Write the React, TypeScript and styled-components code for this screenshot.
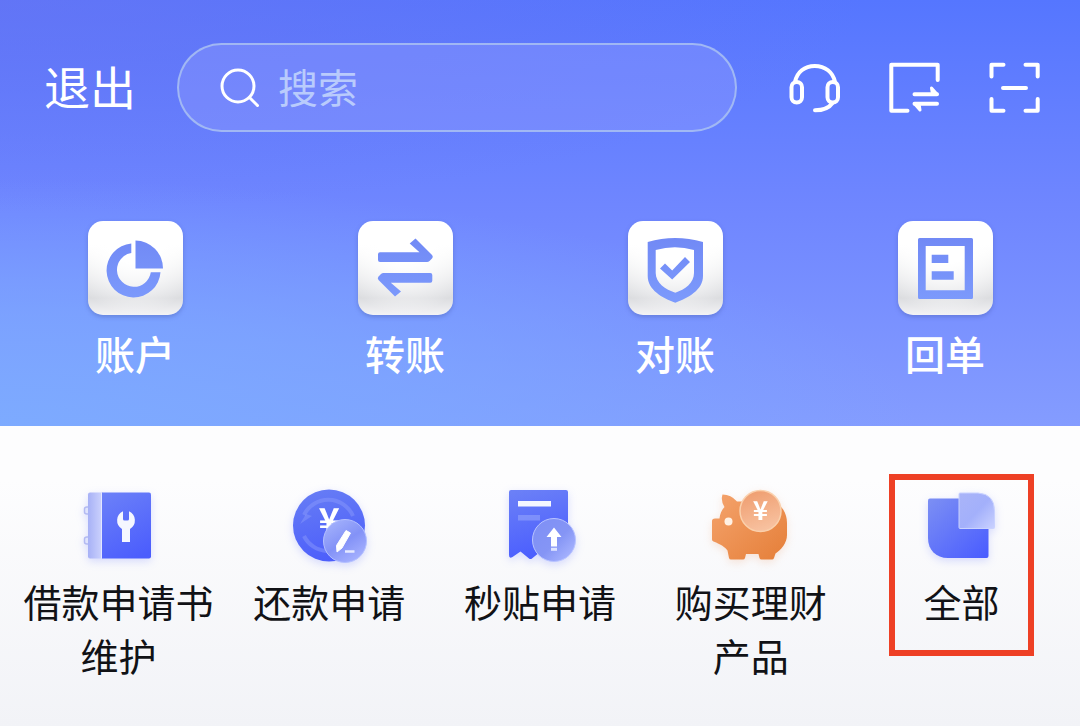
import React from "react";
import styled, { createGlobalStyle } from "styled-components";

const fontStack = '"Noto Sans CJK SC", "Noto Sans", sans-serif';

const GlobalStyle = createGlobalStyle`
  *, *::before, *::after { box-sizing: border-box; }
  body {
    margin: 0;
    min-height: 100vh;
    background: linear-gradient(180deg, #fdfdfd 0, #fdfdfe 480px, #f2f3f7 726px);
    font-family: ${fontStack};
  }
  button, input { font: inherit; }
`;

const Header = styled.header`
  padding-bottom: 44px;
  background:
    radial-gradient(ellipse 85% 58% at 0% 100%, rgba(124, 172, 255, 0.9) 0%, rgba(124, 170, 255, 0.65) 45%, rgba(124, 168, 255, 0) 100%),
    radial-gradient(ellipse 80% 50% at 0% 0%, rgba(106, 116, 240, 0.6) 0%, rgba(106, 116, 240, 0) 100%),
    linear-gradient(180deg, #5576ff 0%, #6f86ff 48%, #849cff 100%);
`;

const TopBar = styled.div`
  display: flex;
  align-items: center;
  padding: 43px 39px 0 44px;
`;

const PlainButton = styled.button`
  display: flex;
  padding: 0;
  border: 0;
  background: none;
  color: inherit;
  cursor: pointer;
`;

const ExitButton = styled(PlainButton)`
  flex: none;
  padding-bottom: 6px;
  color: #fff;
  font-size: 46px;
  line-height: 60px;
`;

const SearchBox = styled.label`
  display: flex;
  flex: 1;
  align-items: center;
  gap: 16px;
  min-width: 0;
  height: 89px;
  margin: 0 52px 0 41px;
  padding: 0 40px;
  border: 2px solid rgba(176, 200, 240, 0.75);
  border-radius: 45px;
  background: rgba(142, 156, 255, 0.4);
`;

const SearchInput = styled.input`
  flex: 1;
  min-width: 0;
  height: 60px;
  padding: 0 0 4px;
  border: 0;
  outline: 0;
  background: transparent;
  color: #fff;
  font-size: 40px;
  &::placeholder { color: #b9cbfc; opacity: 1; }
`;

const Actions = styled.div`
  display: flex;
  gap: 48px;
`;

const QuickGrid = styled.nav`
  display: grid;
  grid-template-columns: repeat(4, 1fr);
  margin-top: 89px;
`;

const QuickItem = styled(PlainButton)`
  flex-direction: column;
  align-items: center;
  gap: 9px;
  color: #fff;
  font-size: 40px;
  font-weight: 500;
  line-height: 58px;
`;

const Tile = styled.span`
  display: block;
  width: 95px;
  height: 94px;
  border-radius: 15px;
  background:
    radial-gradient(ellipse 80% 100% at 50% 0%, #fff 0%, #fff 45%, rgba(255, 255, 255, 0) 100%),
    linear-gradient(180deg, #fff 25%, #dcdde0 82%, #f3f3f5 100%);
  box-shadow: 0 2px 4px rgba(70, 90, 170, 0.4);
`;

const ServiceGrid = styled.nav`
  display: grid;
  grid-template-columns: repeat(5, 1fr);
  align-items: start;
  padding: 60px 13px 40px;
`;

const ServiceItem = styled(PlainButton)<{ $marked?: boolean }>`
  position: relative;
  flex-direction: column;
  align-items: center;
  gap: 8px;
  color: #111216;
  font-size: 38px;
  line-height: 54px;
  white-space: pre-line;

  &::after {
    content: "";
    display: ${(p) => (p.$marked ? "block" : "none")};
    position: absolute;
    top: -12px;
    left: calc(50% - 73px);
    width: 145px;
    height: 182px;
    border: 6px solid #ee4025;
  }
`;

const SearchIcon = () => (
  <svg width="43" height="44" viewBox="0 0 43 44" fill="none" stroke="#fff" strokeWidth="3" strokeLinecap="round" aria-hidden="true">
    <circle cx="19" cy="20" r="16" />
    <path d="M30.500 31.500 38.500 39.500" />
  </svg>
);

const LineIcon = ({ children }: { children: React.ReactNode }) => (
  <svg width="52" height="52" viewBox="0 0 52 52" fill="none" stroke="#fff" strokeWidth="4" strokeLinecap="round" strokeLinejoin="round" aria-hidden="true">
    {children}
  </svg>
);

const HeadsetIcon = () => (
  <LineIcon>
    <path d="M6 20C8 10 15.500 4 25.800 4S44 10 46 20" />
    <rect x="2.500" y="20" width="10.500" height="20.500" rx="5.200" />
    <rect x="38.500" y="20" width="10.500" height="20.500" rx="5.200" />
    <path d="M43.500 41C40 46 34 48.300 26 48.300" />
  </LineIcon>
);

const SwitchIcon = () => (
  <LineIcon>
    <path d="M48.700 18V2.700H2.300V48.700H18.500" />
    <path d="M25.500 32.300H48M25.500 41.700H48" />
    <path d="M42.500 26 48 32.300H43.500ZM25.500 41.700H30L31 48Z" fill="#fff" strokeWidth="3" />
  </LineIcon>
);

const ScanIcon = () => (
  <LineIcon>
    <path d="M2.500 14.500V2.700H14.500M36.500 2.700H48.700V14.500M48.700 37V48.700H36.500M14.500 48.700H2.500V37M14 26H37" />
  </LineIcon>
);

const TileIcon = ({ id, children }: { id: string; children: React.ReactNode }) => (
  <Tile>
    <svg width="95" height="94" viewBox="0 0 95 94" aria-hidden="true">
      <defs>
        <linearGradient id={id} x1="0" y1="16" x2="0" y2="80" gradientUnits="userSpaceOnUse">
          <stop offset="0" stopColor="#7189f5" />
          <stop offset="1" stopColor="#7c9afc" />
        </linearGradient>
      </defs>
      <g fill={`url(#${id})`}>{children}</g>
    </svg>
  </Tile>
);

const AccountIcon = () => (
  <TileIcon id="tile-account">
    <path d="M43.300 22.500A27 27 0 1 0 72.500 51.300H62.800A17 17 0 1 1 43.300 32Z" />
    <path d="M47.500 19.500A27.700 28 0 0 1 75 47.500H47.500Z" />
  </TileIcon>
);

const TransferIcon = () => (
  <TileIcon id="tile-transfer">
    <path d="M22 31.300H61.500L51.700 22.500 57.500 17.600 74 34Q75.500 35.800 74 37.500L71.500 40Q70.500 41 69 41H22Q20 41 20 39V33.300Q20 31.300 22 31.300Z" />
    <path d="M72.300 61.700H32.800L43 70.500 37 75.400 20.500 59Q19 57.200 20.500 55.500L23 53Q24 52 25.500 52H72.300Q74.300 52 74.300 54V59.700Q74.300 61.700 72.300 61.700Z" />
  </TileIcon>
);

const ReconcileIcon = () => (
  <TileIcon id="tile-reconcile">
    <path fillRule="evenodd" d="M19.700 21Q47 13 75 21V55C75 69 60 77 47.300 81.700C34.500 77 19.700 69 19.700 55ZM27.700 29Q47 23.500 66 29V52C66 62 57 68.500 47.300 71.700C37.500 68.500 27.700 62 27.700 52Z" />
    <path d="M32 47.500 37 42.500 44.200 49.500 57 36 62 41 44.200 58.500Z" />
  </TileIcon>
);

const ReceiptTileIcon = () => (
  <TileIcon id="tile-receipt">
    <path fillRule="evenodd" d="M21.500 17H73.500Q75 17 75 18.500V76.500Q75 78 73.500 78H21.500Q20 78 20 76.500V18.500Q20 17 21.500 17ZM27.700 25V69.300H66.700V25Z" />
    <path d="M33.700 33.700H50.300V42H33.700ZM33.700 50.300H55.700V58.700H33.700Z" />
  </TileIcon>
);

const ServiceSvg = styled.svg<{ $warm?: boolean }>`
  display: block;
  overflow: visible;
  filter: drop-shadow(0 3px 4px ${(p) => (p.$warm ? "rgba(235, 140, 80, 0.2)" : "rgba(90, 110, 255, 0.22)")});
`;

const YenMark = ({ x, y, size }: { x: number; y: number; size: number }) => (
  <text x={x} y={y} fontSize={size} fontWeight="700" fontFamily='"Noto Sans CJK SC", sans-serif' fill="#fff" textAnchor="middle">¥</text>
);

const BookIcon = () => (
  <ServiceSvg width="80" height="80" viewBox="0 0 80 80" aria-hidden="true">
    <defs>
      <linearGradient id="book-cover" x1="24" y1="7" x2="60" y2="73" gradientUnits="userSpaceOnUse">
        <stop offset="0" stopColor="#6c81f8" />
        <stop offset="1" stopColor="#4b5dfd" />
      </linearGradient>
      <linearGradient id="book-spine" x1="10" y1="0" x2="24" y2="0" gradientUnits="userSpaceOnUse">
        <stop offset="0" stopColor="#a7b1f6" />
        <stop offset="1" stopColor="#ccd2fd" />
      </linearGradient>
    </defs>
    <path d="M11 21H9Q6.500 21 6.500 23V26Q6.500 28 9 28H11M11 51H9Q6.500 51 6.500 53V56Q6.500 58 9 58H11" fill="#dfe3fd" stroke="#b3baf2" strokeWidth="1.500" />
    <path d="M12 6.500H25V72.500H12Q10 72.500 10 70.500V8.500Q10 6.500 12 6.500Z" fill="url(#book-spine)" />
    <path d="M24 6.500H71Q73 6.500 73 8.500V70.500Q73 72.500 71 72.500H24Z" fill="url(#book-cover)" />
    <path d="M23.500 6.500V72.500" stroke="#e3e7ff" strokeWidth="1" />
    <path d="M45 25.300V33Q45 34.500 46.500 34.500H49.500Q51 34.500 51 33V25.300A10 10 0 0 1 52 43V56H44V43A10 10 0 0 1 45 25.300Z" fill="#f5f7ff" />
  </ServiceSvg>
);

const RepayIcon = () => (
  <ServiceSvg width="80" height="80" viewBox="0 0 80 80" aria-hidden="true">
    <defs>
      <linearGradient id="repay-coin" x1="24" y1="4" x2="40" y2="76" gradientUnits="userSpaceOnUse">
        <stop offset="0" stopColor="#667cf5" />
        <stop offset="1" stopColor="#4c5efb" />
      </linearGradient>
      <linearGradient id="repay-badge" x1="42" y1="36" x2="68" y2="76" gradientUnits="userSpaceOnUse">
        <stop offset="0" stopColor="#a2b0fb" />
        <stop offset="0.500" stopColor="#8392f7" />
        <stop offset="1" stopColor="#a8b3ff" />
      </linearGradient>
    </defs>
    <circle cx="40" cy="39.500" r="36" fill="url(#repay-coin)" />
    <path d="M15 29A27 27 0 0 1 64 30M15 50A27 27 0 0 0 38 65" fill="none" stroke="#8797fb" strokeWidth="4" opacity="0.500" />
    <path d="M11 38 23 30 17 28Z" fill="#8797fb" opacity="0.500" />
    <YenMark x={40} y={48} size={36} />
    <circle cx="56" cy="55" r="21.500" fill="url(#repay-badge)" stroke="#b4c0ff" strokeWidth="1" />
    <path d="M57 44.500 61.500 47 53 62 48 66 47.500 59.500Z" fill="#fff" stroke="#fff" strokeWidth="1" strokeLinejoin="round" />
    <path d="M56 65.500H65.500" stroke="#e6eaff" strokeWidth="2.500" />
  </ServiceSvg>
);

const DiscountIcon = () => (
  <ServiceSvg width="80" height="80" viewBox="0 0 80 80" aria-hidden="true">
    <defs>
      <linearGradient id="discount-sheet" x1="20" y1="4" x2="40" y2="76" gradientUnits="userSpaceOnUse">
        <stop offset="0" stopColor="#6b80f7" />
        <stop offset="1" stopColor="#485bff" />
      </linearGradient>
      <linearGradient id="discount-badge" x1="36" y1="36" x2="72" y2="72" gradientUnits="userSpaceOnUse">
        <stop offset="0" stopColor="#7f90f5" />
        <stop offset="0.550" stopColor="#8595f5" />
        <stop offset="1" stopColor="#aab6ff" />
      </linearGradient>
    </defs>
    <path d="M11 4H66Q68 4 68 6V60L40.500 65.500 32 72.500Q30.500 73.500 29 72.500L20.500 65.500 12.500 71Q9 73 9 69V6Q9 4 11 4Z" fill="url(#discount-sheet)" />
    <path d="M18 15H51V20.500H18Z" fill="#f5f7ff" />
    <path d="M18 29H40V34.500H18Z" fill="#8c9dfb" opacity="0.700" />
    <circle cx="54" cy="54" r="21.500" fill="url(#discount-badge)" stroke="#b9c4ff" strokeWidth="1" />
    <path d="M54 41.500 61.500 51H57V60.500H51V51H46.500Z" fill="#fff" />
    <path d="M51 61.800H57V64.800H51Z" fill="#dfe4ff" />
  </ServiceSvg>
);

const PiggyIcon = () => (
  <ServiceSvg $warm width="80" height="80" viewBox="0 0 80 80" aria-hidden="true">
    <defs>
      <linearGradient id="piggy-body" x1="10" y1="12" x2="66" y2="74" gradientUnits="userSpaceOnUse">
        <stop offset="0" stopColor="#f3a068" />
        <stop offset="1" stopColor="#e6813c" />
      </linearGradient>
      <linearGradient id="piggy-coin" x1="40" y1="5" x2="54" y2="46" gradientUnits="userSpaceOnUse">
        <stop offset="0" stopColor="#ef9e70" />
        <stop offset="1" stopColor="#f8c3a2" />
      </linearGradient>
    </defs>
    <path d="M11.500 8.500Q20 8.500 26 15.500H62C71 19 76 27 76 37V49C76 57 70 64 64.500 67.500L63 72Q62.500 73.500 61 73.500H50.500Q49 73.500 48.500 72L47.500 68H35L34 72Q33.500 73.500 32 73.500H20Q18.500 73.500 18 72L16.500 64.500C14 61 10 58.500 2.500 55.500Q1 55 1 53.500V35Q1 32.500 4 32.500H8.500C9 28 10.500 24 13.500 21Q9.500 15 11.500 8.500Z" fill="url(#piggy-body)" />
    <circle cx="17.500" cy="35.500" r="4" fill="#fff1e4" />
    <circle cx="49.500" cy="25" r="20.500" fill="url(#piggy-coin)" stroke="#fad0ac" strokeWidth="1.500" />
    <YenMark x={49.500} y={34} size={26} />
  </ServiceSvg>
);

const AllIcon = () => (
  <ServiceSvg width="80" height="80" viewBox="0 0 80 80" aria-hidden="true">
    <defs>
      <linearGradient id="all-base" x1="10" y1="14" x2="62" y2="72" gradientUnits="userSpaceOnUse">
        <stop offset="0" stopColor="#7a8df4" />
        <stop offset="1" stopColor="#4a5dff" />
      </linearGradient>
      <linearGradient id="all-glass" x1="38" y1="10" x2="72" y2="42" gradientUnits="userSpaceOnUse">
        <stop offset="0" stopColor="#a9b4f8" />
        <stop offset="0.500" stopColor="#a3b0fb" />
        <stop offset="1" stopColor="#c9d1ff" />
      </linearGradient>
    </defs>
    <path d="M8 12.500H66.500V70Q66.500 72 64.500 72H26C14 72 6 64 6 52V14.500Q6 12.500 8 12.500Z" fill="url(#all-base)" />
    <path d="M38 7H56Q72.500 8 72.500 25V41.500Q72.500 42.500 71.500 42.500H38Q37 42.500 37 41.500V8Q37 7 38 7Z" fill="url(#all-glass)" stroke="#c9d2ff" strokeWidth="1" />
  </ServiceSvg>
);

const quickActions = [
  { label: "账户", Icon: AccountIcon },
  { label: "转账", Icon: TransferIcon },
  { label: "对账", Icon: ReconcileIcon },
  { label: "回单", Icon: ReceiptTileIcon },
];

const services = [
  { label: "借款申请书\n维护", Icon: BookIcon },
  { label: "还款申请", Icon: RepayIcon },
  { label: "秒贴申请", Icon: DiscountIcon },
  { label: "购买理财\n产品", Icon: PiggyIcon },
  { label: "全部", Icon: AllIcon, marked: true },
];

export default function App() {
  return (
    <>
      <GlobalStyle />
      <Header>
        <TopBar>
          <ExitButton type="button">退出</ExitButton>
          <SearchBox>
            <SearchIcon />
            <SearchInput type="text" placeholder="搜索" aria-label="搜索" />
          </SearchBox>
          <Actions>
            <PlainButton type="button" aria-label="客服"><HeadsetIcon /></PlainButton>
            <PlainButton type="button" aria-label="切换"><SwitchIcon /></PlainButton>
            <PlainButton type="button" aria-label="扫一扫"><ScanIcon /></PlainButton>
          </Actions>
        </TopBar>
        <QuickGrid>
          {quickActions.map(({ label, Icon }) => (
            <QuickItem type="button" key={label}>
              <Icon />
              <span>{label}</span>
            </QuickItem>
          ))}
        </QuickGrid>
      </Header>
      <ServiceGrid>
        {services.map(({ label, Icon, marked }) => (
          <ServiceItem type="button" key={label} $marked={marked}>
            <Icon />
            <span>{label}</span>
          </ServiceItem>
        ))}
      </ServiceGrid>
    </>
  );
}
